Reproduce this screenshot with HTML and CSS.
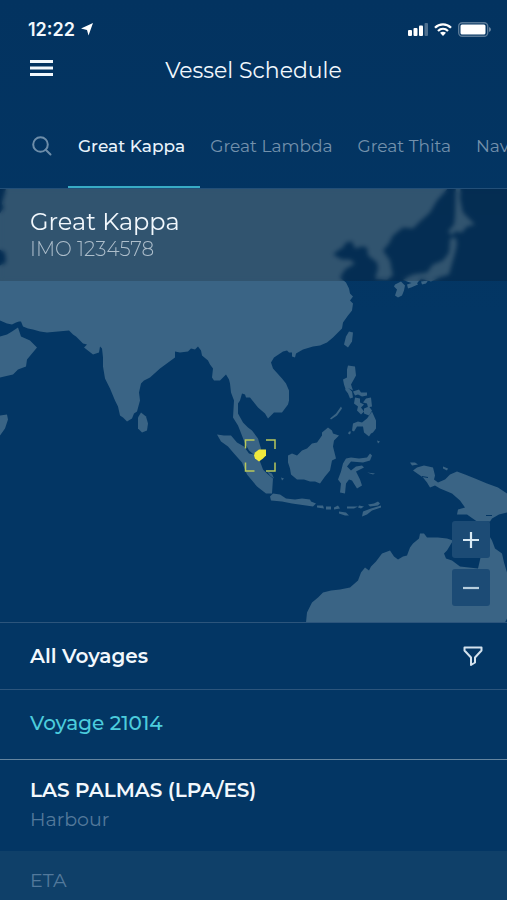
FILE: index.html
```html
<!DOCTYPE html>
<html lang="en">
<head>
<meta charset="utf-8">
<meta name="viewport" content="width=device-width, initial-scale=1">
<title>Vessel Schedule</title>
<link rel="stylesheet" href="styles.css">
</head>
<body>
<div class="screen">
  <div class="status">
    <div class="status-left">
      <span>12:22</span>
      <svg width="12" height="13" viewBox="0 0 12 13" aria-hidden="true"><path d="M12 0 7.500 12.500 6 7 0 5.500Z" fill="#fff"/></svg>
    </div>
    <div class="status-right">
      <svg width="20" height="13" viewBox="0 0 20 13" fill="#fff" aria-hidden="true"><rect y="7" width="4" height="6" rx="1"/><rect x="5.500" y="5" width="4" height="8" rx="1"/><rect x="11" y="2.500" width="4" height="10.500" rx="1"/><rect x="16.500" width="3.500" height="13" rx="1" opacity=".3"/></svg>
      <svg width="18" height="13" viewBox="0 0 18 13" fill="none" stroke="#fff" stroke-width="2.300" aria-hidden="true"><path d="M1 4.800C5.500.300 12.500.300 17 4.800M4 8C7 5.200 11 5.200 14 8"/><path d="M6 9.800Q9 7.500 12 9.800L9 13Z" fill="#fff" stroke="none"/></svg>
      <svg width="33" height="15" viewBox="0 0 33 15" aria-hidden="true"><rect x=".7" y=".7" width="29" height="13.600" rx="3.500" fill="none" stroke="#fff" stroke-opacity=".35" stroke-width="1.400"/><rect x="2.500" y="2.500" width="25" height="10" rx="1.500" fill="#fff"/><path d="M31 5q2 .7 2 2.500t-2 2.500Z" fill="#fff" opacity=".4"/></svg>
    </div>
  </div>

  <header class="appbar">
    <button class="icon-btn menu" type="button" aria-label="Menu">
      <svg width="23" height="16" viewBox="0 0 23 16" fill="#f2f8fd"><path d="M0 0h23v3H0zM0 6.500h23v3H0zM0 13h23v3H0z"/></svg>
    </button>
    <h1>Vessel Schedule</h1>
  </header>

  <nav class="tabs" aria-label="Vessels">
    <button class="icon-btn search" type="button" aria-label="Search">
      <svg width="20" height="20" viewBox="0 0 20 20" fill="none" stroke="#6d8da9" stroke-width="2"><circle cx="8.500" cy="8.500" r="7.300"/><path d="m13.700 13.700 4.800 4.800" stroke-linecap="round"/></svg>
    </button>
    <a class="tab active" href="#kappa" aria-current="page">Great Kappa</a>
    <a class="tab" href="#lambda">Great Lambda</a>
    <a class="tab" href="#thita">Great Thita</a>
    <a class="tab" href="#nav">Nav</a>
  </nav>

  <main>
    <section class="map" id="kappa">
      <svg class="world" viewBox="0 188 507 434" preserveAspectRatio="xMidYMid slice" role="img" aria-label="Vessel position map">
        <g fill="#3a6485">
          <path d="M0 180 6 188 2 203 4 207 0 213V249L5 252 6 262 0 265V320L7 323 12 324 16 322 19 321 21 321 23 326 28 328 33 329 40 331 47 332 58 331 69 330 73 334 76 336 80 340 83 343 87 344 84 347 93 354 99 352 100 346 102 348 103 357 103 366 105 378 110 388 115 400 118 406 120 415 123 417 127 421 132 418 134 413 137 411 140 400 139 392 141 383 144 380 150 377 160 368 175 357 175 351 180 352 188 351 191 348 195 349 198 346 201 350 202 355 208 360 210 364 213 368 212 377 214 380 220 380 226 374 229 379 230 383 231 392 234 400 233 417 238 425 240 430 245 443 249 450 256 456 260 455 261 448 258 438 252 430 248 427 243 422 238 413 238 403 240 400 242 393 245 394 246 397 250 397 258 407 265 413 268 418 274 412 282 412 288 404 289 400 289 390 286 383 282 378 273 368 271 362 274 357 277 355 283 351 287 350 289 352 292 352 292 356 295 357 296 353 303 349 313 346 320 345 327 342 333 337 338 332 342 328 343 322 348 315 352 310 353 303 350 300 353 296 350 293 349 288 346 282 340 277 345 269 355 263 350 259 342 259 333 254 338 250 343 247 346 242 352 241 355 248 362 246 367 247 368 255 377 262 378 268 375 278 387 279 393 275 390 260 383 250 389 243 393 235 403 227 413 228 420 221 430 212 437 200 447 189V180Z"/>
          <path d="M0 336 7 334 12 331 18 327 21 336 30 340 37 347 27 359 26 366 18 369 13 374 0 377ZM0 415 7 414 8 419 5 428 0 435Z"/>
          <path d="m141 412 5 4 2 7-1 7-5 2-4-4v-11Z"/>
          <path d="M456 180h5l-1 18 3 14 7 7 5 5-8 2-5 6-7-1-3 4-4-4 6-7 1-9ZM450 238l6-1 1 7-2 9-4 14-2 7-10 3-8 4-10-3-5 6-9-3-4-2 10-5 14-2 6-8 10-4 6-8Z"/>
          <path d="m395 284 6-3 4 4-1 5-2 5-4 2-3-2 2-6-3-3ZM407 284l9-3 2 3-7 3-3 1ZM421 281l7-1-2 3-4 1Z"/>
          <path d="m349 331 4 1-1 9-4 6-4-3 2-8Z"/>
          <path d="m348 365 7 1 1 9-5 9 2 6-4-2-3 2-2-6-1-5 4-2v-8Z"/>
          <path d="m345 389 4-1 3 3 1 6-3 1-2-5ZM353 391l6-2 2 3 6 0v3l-5 1-4-2-3 1ZM355 397l5 1v4l4 2-3 3 3 4-3 3-4-4 1-4-4-3ZM366 398l5-1 1 9-4 1-1-4-4-1ZM364 408l5-2 3 4-3 5-5-2ZM372 411l4 9 0 8-3 4-2 1-2 3-5-4-1-6-6 0-3 5-2-1 1-7 5-2 4 1 5-4ZM349 431l2 0-1 3-2-1ZM330 418l6-5 5-7 1 2-5 7-6 4Z"/>
          <path d="M328 427 332 430 333 433 339 435 334 440 333 446 336 458 332 460 330 470 325 476 320 483 315 481 310 481 304 479 297 479 291 474 290 468 288 462 288 455 292 453 297 455 302 450 307 448 312 443 317 442 322 435 322 432Z"/>
          <path d="m346 458 5-1 8 1 8-1 3-4 2 2-2 5-7 2-12-1-4 5 4 4 5-4 6-1 2 2-8 4 4 8 2 6-5 3-5-8-3-1-3 4-1 10-5-1 1-9-3-4 3-8 2-8Z"/>
          <path d="m217 434 7 1 7 0 6 7 7 4 5 7 5 1 6 7 3 8 4 4 6 5-1 15-6 0-9-7-10-12-5-12-8-9-6-7-7-5Z"/>
          <path d="m273 493 7 1 6 4 9 1 7-1 8 1 1 2 5 2-3 3-21-3-10-2-11-1-1-4ZM317 505h6l1 3-7-1ZM326 506h5v3h-5ZM334 507l4-2 2 3-6 1ZM347 506l11 0-4 2-7-0ZM339 511l7 1 3 3-4 0-6-2ZM359 505l5 1-3 2-3-1ZM368 504l6-1 4-2 2 2-2 2-8 1ZM363 511l8-3 10-3 0 2-9 3-5 4-5 2ZM267 471l5 2 2 5-4-3ZM281 477l3 1-2 2ZM377 440l3 1-2 2ZM367 472l8 1-2 1Z"/>
          <path d="M410 462 415 462 418 464 412 465ZM413 470 417 467 424 465 433 467 435 475 434 479 438 482 445 479 450 474 457 471 465 474 475 478 487 483 498 487 507 493V512L499 514 492 518 490 521 477 521 467 514 457 514 458 509 465 507 460 500 452 493 440 488 435 485 430 487 427 482 423 477ZM443 466l5 2-1 2-4-2Z"/>
          <path d="M306 622 307 612 312 602 318 597 323 592 331 590 340 589 350 587 358 580 361 572 365 567 369 570 371 566 376 561 382 553 390 550 394 556 398 559 403 556 407 555 410 547 413 543 419 538 420 533 424 533 427 537 438 537 447 538 453 540 447 550 444 553 446 558 452 560 460 566 478 568 481 555 489 535 492 540 495 548 502 553 504 562 507 572V618L505 622Z"/>
        </g>
        <path d="M486 515h6M422 476l6 1" stroke="#033664" fill="none"/>
        <path d="M245.500 448v-8.500h9M266 439.500h9v9M275 462v8.500h-9M254.500 470.500h-9V462" fill="none" stroke="#b9c85b" stroke-width="1.500"/>
        <path d="m254 455 1-3 4-3h7l0 6-3 3-4 3-4-3Z" fill="#f0e83c"/>
      </svg>
      <div class="vessel">
        <h2>Great Kappa</h2>
        <p>IMO 1234578</p>
      </div>
      <div class="zoom">
        <button type="button" aria-label="Zoom in"><svg width="16" height="16" viewBox="0 0 16 16"><path d="M8 0v16M0 8h16" stroke="#d9eaf4" stroke-width="2.200"/></svg></button>
        <button type="button" aria-label="Zoom out"><svg width="16" height="16" viewBox="0 0 16 16"><path d="M0 8h16" stroke="#b7cedd" stroke-width="2.200"/></svg></button>
      </div>
    </section>

    <section class="voyages">
      <div class="row">
        <h2>All Voyages</h2>
        <button class="icon-btn" type="button" aria-label="Filter">
          <svg width="20" height="20" viewBox="0 0 20 20" fill="none" stroke="#d4e2ed" stroke-width="2" stroke-linejoin="round"><path d="M1.500 1.500h17v3L12 11.500v5L8 19v-7.500L1.500 4.500Z"/></svg>
        </button>
      </div>
      <div class="row voyage"><h3>Voyage 21014</h3></div>
      <div class="port">
        <h3>LAS PALMAS (LPA/ES)</h3>
        <p>Harbour</p>
      </div>
      <div class="eta">ETA</div>
    </section>
  </main>
</div>
</body>
</html>
```
FILE: styles.css
```css
* { box-sizing: border-box; }

body {
  margin: 0;
  background: #033664;
  color: #f2f8fd;
  font-family: Montserrat, Inter, "Liberation Sans", sans-serif;
}

h1, h2, h3, p { margin: 0; }

button {
  padding: 0;
  border: 0;
  background: none;
  font: inherit;
  color: inherit;
}

svg { display: block; }

.screen {
  min-height: 100vh;
  display: flex;
  flex-direction: column;
  overflow: hidden;
  background: linear-gradient(#033360, #033664 35%);
}

.status {
  display: flex;
  justify-content: space-between;
  align-items: center;
  padding: 18px 16px 0 28px;
  height: 40px;
  font-family: Inter, "Liberation Sans", sans-serif;
  font-size: 18px;
  font-weight: 600;
}

.status-left, .status-right {
  display: flex;
  align-items: center;
  gap: 6px;
}

.appbar {
  display: grid;
  grid-template-columns: 1fr auto 1fr;
  align-items: center;
  height: 60px;
  padding: 0 30px;
}

.menu {
  justify-self: start;
  padding-bottom: 4px;
}

.appbar h1 {
  padding-top: 2px;
  font-size: 22px;
  line-height: 28px;
  font-weight: 400;
}

.tabs {
  display: flex;
  align-items: stretch;
  height: 89px;
  padding-left: 32px;
  border-bottom: 1px solid #234f78;
  overflow: hidden;
}

.search {
  padding-top: 4px;
  margin-right: 16px;
}

.tab {
  display: flex;
  align-items: center;
  flex: none;
  padding: 6px 15px 0 10px;
  border-bottom: 2px solid transparent;
  color: #7391ac;
  font-size: 17px;
  font-weight: 400;
  text-decoration: none;
  white-space: nowrap;
}

.tab:last-child { padding-right: 0; }

.tab.active {
  border-color: #38abc5;
  color: #e9f3fb;
  font-weight: 500;
}

.map { position: relative; }

.world {
  width: 100%;
  aspect-ratio: 507 / 433;
}

.vessel {
  position: absolute;
  inset: 0 0 auto;
  padding: 18px 30px 20px;
  background: rgba(10, 10, 10, 0.18);
  backdrop-filter: blur(2px);
}

.vessel h2 {
  font-size: 24px;
  line-height: 30px;
  font-weight: 400;
}

.vessel p {
  color: #adbecb;
  font-size: 20px;
  line-height: 24px;
  font-weight: 300;
}

.zoom {
  position: absolute;
  right: 17px;
  bottom: 16px;
  display: grid;
  gap: 11px;
}

.zoom button {
  display: grid;
  place-items: center;
  width: 38px;
  height: 37px;
  border-radius: 3px;
  background: #1c4b75;
}

main, .voyages {
  flex: 1;
  display: flex;
  flex-direction: column;
}

.row {
  display: flex;
  justify-content: space-between;
  align-items: center;
  height: 67px;
  padding: 0 24px 0 30px;
  border-top: 1px solid #2c557c;
}

.row h2, .row h3, .port h3 {
  font-size: 20px;
  line-height: 24px;
  font-weight: 600;
}

.row.voyage {
  height: 70px;
  padding-bottom: 4px;
}

.row.voyage h3 {
  color: #4cccdc;
  font-weight: 500;
}

.port {
  padding: 18px 30px 19px;
  border-top: 1px solid #64859f;
}

.port p, .eta {
  color: #53799b;
  font-size: 19px;
  line-height: 24px;
  font-weight: 400;
}

.port p { padding-top: 6px; }

.eta {
  flex: 1;
  padding: 18px 30px 7px;
  background: #0f4069;
}
```
